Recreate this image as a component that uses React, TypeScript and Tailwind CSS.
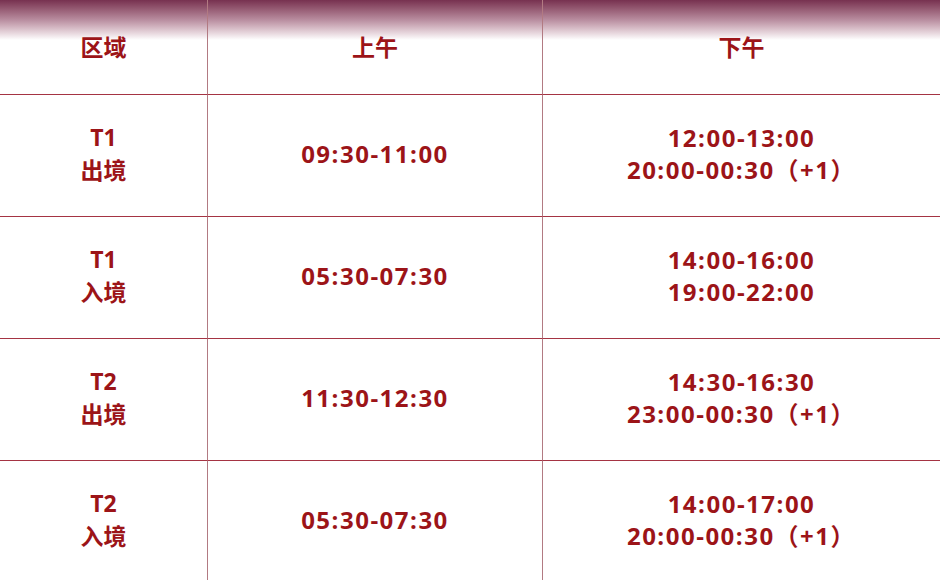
const rows = [
  { area: ["T1", "出境"], am: "09:30-11:00", pm: ["12:00-13:00", "20:00-00:30（+1）"] },
  { area: ["T1", "入境"], am: "05:30-07:30", pm: ["14:00-16:00", "19:00-22:00"] },
  { area: ["T2", "出境"], am: "11:30-12:30", pm: ["14:30-16:30", "23:00-00:30（+1）"] },
  { area: ["T2", "入境"], am: "05:30-07:30", pm: ["14:00-17:00", "20:00-00:30（+1）"] },
]

export default function App() {
  return (
    <div
      className="relative h-[580px] w-[940px] overflow-hidden bg-white font-bold text-[#9c1418]"
      style={{ fontFamily: '"Open Sans", "Noto Sans CJK SC", sans-serif' }}
    >
      <div className="pointer-events-none absolute inset-x-0 top-0 h-[40px] bg-gradient-to-b from-[#773150] via-[#b98ea0] to-white" />
      <div className="relative grid grid-cols-[208px_335px_1fr]">
        <div className="flex h-[95px] items-center justify-center border-r border-b border-r-[#b27a82] border-b-[#a53443] text-[23px]">
          区域
        </div>
        <div className="flex h-[95px] items-center justify-center border-r border-b border-r-[#b27a82] border-b-[#a53443] text-[23px]">
          上午
        </div>
        <div className="flex h-[95px] items-center justify-center border-b border-b-[#a53443] text-[23px]">
          下午
        </div>
        {rows.map((row, i) => (
          <div key={i} className="contents">
            <div className="flex h-[122px] flex-col items-center justify-center border-r border-b border-r-[#b27a82] border-b-[#a53443] pb-[4px] text-[23px] leading-[33px]">
              {row.area.map((t) => (
                <span key={t}>{t}</span>
              ))}
            </div>
            <div className="flex h-[122px] items-center justify-center border-r border-b border-r-[#b27a82] border-b-[#a53443] pb-[4px] text-[24px] tracking-[1.5px]">
              {row.am}
            </div>
            <div className="flex h-[122px] flex-col items-center justify-center border-b border-b-[#a53443] pb-[4px] text-[24px] leading-[32px] tracking-[1.5px]">
              {row.pm.map((t) => (
                <span key={t}>{t}</span>
              ))}
            </div>
          </div>
        ))}
      </div>
    </div>
  )
}
